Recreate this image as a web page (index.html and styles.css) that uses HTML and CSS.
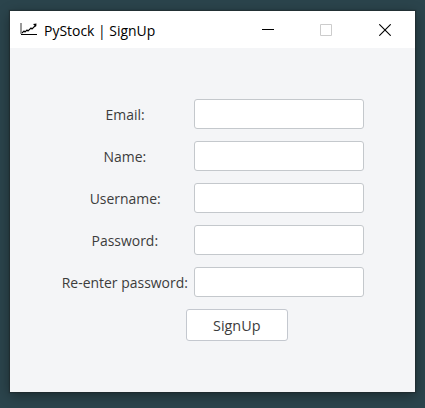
FILE: index.html
```html
<!DOCTYPE html>
<html lang="en">
<head>
<meta charset="utf-8">
<title>PyStock | SignUp</title>
<link rel="stylesheet" href="styles.css">
</head>
<body>
<main class="window">
  <header class="titlebar">
    <svg class="logo" width="18" height="13" viewBox="0 0 18 13" fill="none">
      <path d="M1 0v11" stroke="#999" stroke-width="2"/>
      <path d="M1 11.5h16" stroke="#000"/>
      <path d="M2 10l2-2 1 1 2-2 1 1 3-3 1 1 4-4" stroke="#000" stroke-width="1.1"/>
      <path d="M13 1L16.5 0.5 16 4z" fill="#000"/>
    </svg>
    <h1 class="title">PyStock | SignUp</h1>
    <div class="controls">
      <svg width="12" height="12" viewBox="0 0 12 12"><path d="M0 5.5h12" stroke="#000"/></svg>
      <svg width="12" height="12" viewBox="0 0 12 12"><path d="M.5.5h11v11H.5z" fill="none" stroke="#ccc"/></svg>
      <svg class="close" width="12" height="12" viewBox="0 0 12 12"><path d="M.3.3l11.4 11.4M11.7.3L.3 11.7" stroke="#000" stroke-width="1.1"/></svg>
    </div>
  </header>
  <form class="form">
    <label class="label" for="email"><span>Email:</span></label><input class="field" id="email">
    <label class="label" for="name"><span>Name:</span></label><input class="field" id="name">
    <label class="label" for="username"><span>Username:</span></label><input class="field" id="username">
    <label class="label" for="password"><span>Password:</span></label><input class="field" id="password" type="password">
    <label class="label" for="repeat"><span>Re-enter password:</span></label><input class="field" id="repeat" type="password">
    <button class="submit" type="button"><span>SignUp</span></button>
  </form>
</main>
</body>
</html>
```
FILE: styles.css
```css
* { box-sizing: border-box; }
body {
  margin: 0;
  height: 408px;
  padding: 11px 10px 16px;
  overflow: hidden;
  background: #2b444c;
  font-family: "Open Sans", "Noto Sans", sans-serif;
  font-size: 15px;
}
.window {
  height: 381px;
  background: #f4f5f7;
  box-shadow: 0 0 1px 1px rgba(30, 35, 38, .5), 0 3px 12px rgba(0, 0, 0, .4);
}
.titlebar {
  display: flex;
  align-items: center;
  height: 37px;
  padding: 0 24px 0 10px;
  background: #fff;
}
.title {
  margin: 0 0 0 6px;
  font-size: 15px;
  font-weight: 400;
  line-height: 20px;
  color: #000;
  transform: scaleX(.93);
  transform-origin: left;
}
.controls { display: flex; gap: 46px; margin-left: auto; }
.controls svg, .logo { display: block; }
.controls .close { margin-left: 1px; }
.form {
  display: grid;
  grid-template-columns: 128px 170px;
  grid-auto-rows: 30px;
  gap: 12px 5px;
  padding: 51px 0 0 51px;
}
.label {
  display: flex;
  align-items: center;
  justify-content: center;
  white-space: nowrap;
  color: #3c3c3c;
}
.label span, .submit span {
  display: inline-block;
  transform: scaleX(.93);
}
.field {
  width: 170px;
  height: 30px;
  border: 1px solid #c4c8cc;
  border-radius: 3px;
  background: #fff;
}
.submit {
  grid-column: 1 / -1;
  margin-left: 125px;
  width: 102px;
  height: 32px;
  padding: 0;
  border: 1px solid #c4c8cf;
  border-radius: 3px;
  background: #fff;
  font: inherit;
  color: #3c3c3c;
}
.submit span { transform: scaleX(.96); }
```
